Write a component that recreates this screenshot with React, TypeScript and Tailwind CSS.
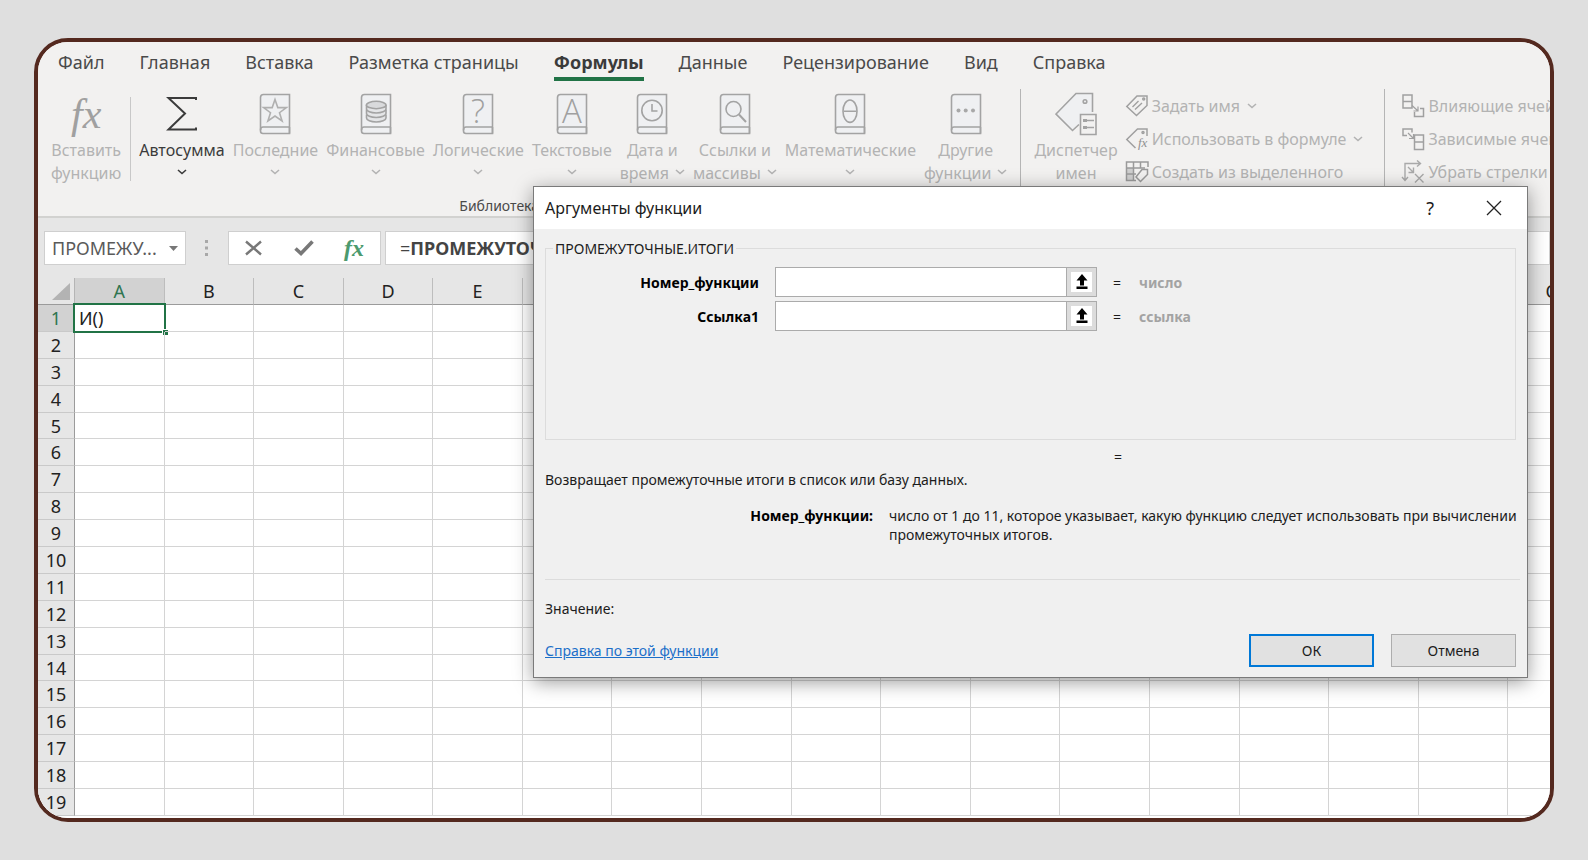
import React, { useState } from 'react';

const TABS = ['Файл', 'Главная', 'Вставка', 'Разметка страницы', 'Формулы', 'Данные', 'Рецензирование', 'Вид', 'Справка'];
const COLUMNS = 'ABCDEFGHIJKLMNOPQ'.split('');
const ROWS = Array.from({ length: 19 }, (_, i) => i + 1);

const Chevron: React.FC = () => (
  <svg width="10" height="6" viewBox="0 0 10 6" fill="none" stroke="currentColor" strokeWidth="1.6">
    <path d="M1 1L5 4.5L9 1" />
  </svg>
);

const Book: React.FC<{ children: React.ReactNode }> = ({ children }) => (
  <svg width="32" height="42" viewBox="0 0 32 42" fill="none" stroke="#a3a3a3" strokeWidth="1.6">
    <path d="M4.5 1.5H30.5V40.5H4C2.5 40.5 1.5 39.5 1.5 38V4.5C1.5 2.8 2.8 1.5 4.5 1.5Z" fill="#eff0f2" />
    <path d="M30.5 34H4C2.5 34 1.5 35 1.5 37.2M30.5 34V40.5" />
    {children}
  </svg>
);

const StarMark = () => <path d="M16 6.5L18.8 14.6H27.4L20.5 19.7L23.1 28L16 23L8.9 28L11.5 19.7L4.6 14.6H13.2Z" stroke="#b0b0b0" />;

const CoinsMark = () => (
  <g fill="#e4e5e7">
    <path d="M6.5 21.5V25C6.5 27.2 10.7 29 16.2 29S26 27.2 26 25V21.5" />
    <path d="M6.5 16.5V20.5C6.5 22.7 10.7 24.5 16.2 24.5S26 22.7 26 20.5V16.5" />
    <path d="M6.5 12V16C6.5 18.2 10.7 20 16.2 20S26 18.2 26 16V12" />
    <ellipse cx="16.2" cy="12" rx="9.8" ry="3.7" fill="#d9dadc" />
  </g>
);

const LetterMark: React.FC<{ letter: string }> = ({ letter }) => (
  <text x="16" y="30" textAnchor="middle" fontSize="33" fontFamily="Open Sans, sans-serif" fontWeight="300" fill="#a0a0a0" stroke="none">{letter}</text>
);

const ClockMark = () => (
  <g>
    <circle cx="16" cy="17.5" r="10.2" />
    <path d="M16 11V18H21.5" />
  </g>
);

const LensMark = () => (
  <g>
    <circle cx="14.5" cy="16" r="7.5" />
    <path d="M20 21.5L27 29" strokeWidth="2" />
  </g>
);

const ThetaMark = () => (
  <g>
    <ellipse cx="16" cy="18.2" rx="7" ry="11.2" />
    <path d="M9.5 18.2H22.5" />
  </g>
);

const DotsMark = () => (
  <g fill="#a8a8a8" stroke="none">
    <circle cx="8.5" cy="17.5" r="2" />
    <circle cx="15.7" cy="17.5" r="2" />
    <circle cx="23" cy="17.5" r="2" />
  </g>
);

const SigmaIcon = () => (
  <svg width="32" height="42" viewBox="0 0 32 42" fill="none" stroke="#3b3b3b" strokeWidth="2">
    <path d="M30 7V5H2.5L19 20.500L2.500 36.500H30V34.500" />
  </svg>
);

const NameManagerIcon = () => (
  <svg width="42" height="44" viewBox="0 0 42 44" fill="none" stroke="#a3a3a3" strokeWidth="1.6">
    <path d="M37.5 20V1.5H21L1 22L17.5 38.500L24 32.500" fill="#eff0f2" />
    <circle cx="30" cy="9.5" r="1.8" />
    <path d="M25.500 22.500H41V42.500H25.500Z" fill="#f2f1f0" />
    <path d="M28 28.500H32M28 35.500H32" strokeWidth="3" />
    <path d="M32 28.500H39M32 35.500H39" strokeWidth="1.4" />
  </svg>
);

const TagIcon = () => (
  <svg width="24" height="24" viewBox="0 0 24 24" fill="none" stroke="#a0a0a0" strokeWidth="1.5">
    <path d="M12 2H22V11.5L11.5 21.5L1.8 12.5Z" />
    <path d="M7.500 13L13.500 7M10 15.500L17 9" strokeWidth="1.4" />
    <circle cx="18.7" cy="5" r="1" />
  </svg>
);

const TagFxIcon = () => (
  <svg width="24" height="24" viewBox="0 0 24 24" fill="none" stroke="#a0a0a0" strokeWidth="1.5">
    <path d="M22 9V2H12.5L1.8 12.5L10.500 21" />
    <circle cx="18" cy="5.500" r="1" />
    <text x="13" y="20" fontSize="13" fontStyle="italic" fontFamily="Liberation Serif, serif" fill="#909090" stroke="none">fx</text>
  </svg>
);

const FromSelectionIcon = () => (
  <svg width="24" height="24" viewBox="0 0 24 24" fill="none" stroke="#9a9a9a" strokeWidth="1.5">
    <path d="M2 8H8V20H2Z" fill="#cfcfcf" stroke="none" />
    <path d="M23 7V2H1.5V20.5H11M1.5 8H20M1.5 14H11M8.5 2V20M15.5 2V8" />
    <path d="M17 9.5H22.5V14.5L15.5 21.5L11 17Z" fill="#f2f1f0" />
  </svg>
);

const PrecedentsIcon = () => (
  <svg width="24" height="24" viewBox="0 0 24 24" fill="none" stroke="#a0a0a0" strokeWidth="1.5">
    <path d="M2 1H11V14H2ZM2 7.5H11" />
    <path d="M13.5 18V22.5H22.5V14.5H19" />
    <path d="M11 11.5L16.5 16.5M17 12.5V17H12.5" strokeWidth="1.2" />
  </svg>
);

const DependentsIcon = () => (
  <svg width="24" height="24" viewBox="0 0 24 24" fill="none" stroke="#a0a0a0" strokeWidth="1.5">
    <path d="M6 8.5H2V2H11V5.5" />
    <path d="M13.5 8H22.5V22.5H13.5ZM13.5 15H22.5" />
    <path d="M7 6L12 11M12.5 7V11.5H8" strokeWidth="1.2" />
  </svg>
);

const RemoveArrowsIcon = () => (
  <svg width="24" height="24" viewBox="0 0 24 24" fill="none" stroke="#a9a9a9" strokeWidth="1.4">
    <path d="M4 20V3.5H19M16 0.5L19.5 3.5L16 6.5M1 17L4 20.5L7 17" />
    <path d="M7 7L12 12M12.5 7.5V12.5H7.5M14 14L22.5 22.5M22.5 14L14 22.5" />
  </svg>
);

const LIBRARY = [
  { first: 'Последние', mark: <StarMark /> },
  { first: 'Финансовые', mark: <CoinsMark /> },
  { first: 'Логические', mark: <LetterMark letter="?" /> },
  { first: 'Текстовые', mark: <LetterMark letter="A" /> },
  { first: 'Дата и', second: 'время', mark: <ClockMark /> },
  { first: 'Ссылки и', second: 'массивы', mark: <LensMark /> },
  { first: 'Математические', mark: <ThetaMark /> },
  { first: 'Другие', second: 'функции', mark: <DotsMark /> }
];

interface RibbonButtonProps {
  icon: React.ReactNode;
  first: string;
  second?: string;
  menu?: boolean;
  enabled?: boolean;
}

const RibbonButton: React.FC<RibbonButtonProps> = ({ icon, first, second, menu, enabled }) => (
  <button
    disabled={!enabled}
    className={`flex shrink-0 flex-col items-center whitespace-nowrap text-base leading-[23px] ${enabled ? 'text-[#3b3b3b]' : 'text-[#b3b3b3]'}`}
  >
    <span className="mb-0.5 flex h-[46px] items-center">{icon}</span>
    <span>{first}</span>
    <span className="flex h-[23px] items-center gap-1.5">
      {second}
      {menu && <span className="pb-1"><Chevron /></span>}
    </span>
  </button>
);

const SmallButton: React.FC<{ icon: React.ReactNode; label: string; menu?: boolean }> = ({ icon, label, menu }) => (
  <button disabled className="flex h-[33px] items-center gap-[3px] whitespace-nowrap text-base text-[#b3b3b3]">
    {icon}
    <span>{label}</span>
    {menu && <span className="pl-1"><Chevron /></span>}
  </button>
);

const Ribbon: React.FC = () => {
  const [activeTab, setActiveTab] = useState('Формулы');

  return (
    <header className="h-[176px] shrink-0 overflow-hidden border-b-2 border-[#d2d2d0] bg-[#f2f1f0]">
      <nav className="flex h-[47px] items-start gap-[35px] pl-5 pt-2">
        {TABS.map((tab) => (
          <button
            key={tab}
            onClick={() => setActiveTab(tab)}
            className={`h-[31px] whitespace-nowrap border-b-4 pb-[3px] text-lg leading-6 ${activeTab === tab ? 'border-[#217346] font-bold text-[#3b3b3b]' : 'border-transparent text-[#4a4a4a]'}`}
          >
            {tab}
          </button>
        ))}
      </nav>
      <div className="flex">
        <div className="pl-[13px] pr-[9px] pt-0.5">
          <RibbonButton
            icon={<span className="font-['Liberation_Serif',serif] text-[42px] italic leading-none text-[#a0a0a0]">fx</span>}
            first="Вставить"
            second="функцию"
          />
        </div>
        <div>
          <div className="flex gap-2 pt-0.5">
            <div className="mt-1.5 h-[84px] w-px bg-[#c8c8c8]" />
            <RibbonButton icon={<SigmaIcon />} first="Автосумма" menu enabled />
            {LIBRARY.map(({ first, second, mark }) => (
              <RibbonButton key={first} icon={<Book>{mark}</Book>} first={first} second={second} menu />
            ))}
          </div>
          <p className="mt-[11px] pl-[329px] text-sm text-[#4a4a4a]">Библиотека функций</p>
        </div>
        <div className="ml-[13px] h-[122px] w-px shrink-0 bg-[#b5b5b5]" />
        <div className="pl-[13px] pt-0.5">
          <RibbonButton icon={<NameManagerIcon />} first="Диспетчер" second="имен" />
        </div>
        <div className="pl-[7px]">
          <SmallButton icon={<TagIcon />} label="Задать имя" menu />
          <SmallButton icon={<TagFxIcon />} label="Использовать в формуле" menu />
          <SmallButton icon={<FromSelectionIcon />} label="Создать из выделенного" />
        </div>
        <div className="ml-[21px] h-[122px] w-px shrink-0 bg-[#b5b5b5]" />
        <div className="pl-4">
          <SmallButton icon={<PrecedentsIcon />} label="Влияющие ячейки" />
          <SmallButton icon={<DependentsIcon />} label="Зависимые ячейки" />
          <SmallButton icon={<RemoveArrowsIcon />} label="Убрать стрелки" menu />
        </div>
      </div>
    </header>
  );
};

const FormulaBar: React.FC = () => (
  <div className="flex h-[60px] shrink-0 items-center bg-[#e6e6e6] pl-1.5">
    <button className="flex h-[34px] w-[142px] items-center justify-between border border-[#cfcfcf] bg-white px-[7px] text-lg text-[#5a5a5a]">
      ПРОМЕЖУ...
      <svg width="9" height="5" viewBox="0 0 9 5" fill="#777"><path d="M0 0H9L4.5 5Z" /></svg>
    </button>
    <svg className="mx-[18px]" width="6" height="18" viewBox="0 0 6 18" fill="#a8a8a8">
      <path d="M1 1H4V4H1ZM1 7.5H4V10.5H1ZM1 14H4V17H1Z" />
    </svg>
    <div className="flex h-[34px] w-[153px] items-center justify-between border border-[#cfcfcf] bg-white px-4">
      <button aria-label="Отмена ввода">
        <svg width="18" height="18" viewBox="0 0 18 18" fill="none" stroke="#787878" strokeWidth="2.4"><path d="M1 2.5L16 15.5M16 2.5L1 15.5" /></svg>
      </button>
      <button aria-label="Ввод">
        <svg width="20" height="18" viewBox="0 0 20 18" fill="none" stroke="#787878" strokeWidth="3.6"><path d="M1.5 9.5L7 14.5L18.5 2.5" /></svg>
      </button>
      <button className="font-['Liberation_Serif',serif] text-2xl font-bold italic leading-none text-[#4c9a6e]">fx</button>
    </div>
    <div className="ml-1 flex h-[34px] flex-1 items-center overflow-hidden border border-[#cfcfcf] bg-white pl-3.5 text-lg text-[#444]">
      =<b>ПРОМЕЖУТОЧНЫЕ.ИТОГИ</b>(
    </div>
  </div>
);

const Sheet: React.FC = () => (
  <div className="min-h-0 flex-1 overflow-hidden bg-white">
    <table className="h-[538px] w-[1560px] table-fixed border-separate border-spacing-0 text-lg leading-5 text-[#222]">
      <thead>
        <tr className="h-[27px] bg-[#e6e6e6]">
          <th className="w-[37px] border-b border-r border-b-[#9b9b9b] border-r-[#b5b5b5] p-0">
            <svg className="ml-auto mr-1" width="18" height="17" viewBox="0 0 18 17" fill="#b3b3b3"><path d="M18 0V17H0Z" /></svg>
          </th>
          {COLUMNS.map((col) => (
            <th
              key={col}
              className={`border-b border-r border-b-[#9b9b9b] border-r-[#bdbdbd] p-0 font-normal ${col === 'A' ? 'bg-[#d2d2d2] text-[#2f7550]' : ''}`}
            >
              {col}
            </th>
          ))}
        </tr>
      </thead>
      <tbody>
        {ROWS.map((row) => (
          <tr key={row} className="h-[26px]">
            <th className={`border-b border-r border-b-[#c9c9c9] border-r-[#9b9b9b] p-0 font-normal ${row === 1 ? 'bg-[#d2d2d2] text-[#2f7550]' : 'bg-[#e6e6e6]'}`}>
              {row}
            </th>
            {COLUMNS.map((col) => (
              <td key={col} className="relative border-b border-r border-[#d4d4d4] p-0">
                {row === 1 && col === 'A' && (
                  <div className="absolute -inset-x-0.5 -bottom-0.5 -top-0.5 flex items-center border-2 border-[#217346] pl-1">
                    И()
                    <span className="absolute -bottom-1 -right-1 size-1.5 border-l border-t border-white bg-[#217346]" />
                  </div>
                )}
              </td>
            ))}
          </tr>
        ))}
      </tbody>
    </table>
  </div>
);

const Argument: React.FC<{ id: string; label: string; hint: string }> = ({ id, label, hint }) => {
  const [value, setValue] = useState('');

  return (
    <div className="flex items-center">
      <label htmlFor={id} className="w-[213px] text-right font-bold text-black">{label}</label>
      <div className="ml-4 flex h-[30px] w-[322px] border border-[#ababab] bg-white">
        <input id={id} value={value} onChange={(e) => setValue(e.target.value)} className="min-w-0 flex-1 px-1 outline-none" />
        <button aria-label={`Выбрать диапазон: ${label}`} className="flex w-[29px] items-center justify-center border-4 border-[#dcdcdc] bg-white outline outline-1 outline-[#ababab]">
          <svg width="12" height="16" viewBox="0 0 12 16" fill="#000"><path d="M6 0L11.5 6.5H8V11.5H4V6.5H0.5ZM0.5 12.500H11.5V15H0.5Z" /></svg>
        </button>
      </div>
      <span className="ml-4 w-[26px]">=</span>
      <span className="font-bold text-[#a3a3a3]">{hint}</span>
    </div>
  );
};

const ArgumentsDialog: React.FC = () => (
  <section
    role="dialog"
    aria-labelledby="dialog-title"
    className="absolute left-[495px] right-[22px] top-36 border border-[#7a7a7a] bg-[#f0f0f0] text-sm leading-[19px] text-[#1c1c1c] shadow-[0_4px_18px_rgba(0,0,0,0.4)]"
  >
    <div className="flex h-[42px] items-center bg-white pl-[11px] pr-[25px]">
      <h2 id="dialog-title" className="flex-1 text-base">Аргументы функции</h2>
      <button aria-label="Справка" className="mr-[52px] text-lg">?</button>
      <button aria-label="Закрыть">
        <svg width="16" height="16" viewBox="0 0 16 16" fill="none" stroke="#222" strokeWidth="1.3"><path d="M1 1L15 15M15 1L1 15" /></svg>
      </button>
    </div>
    <div className="px-[11px] py-2.5">
      <fieldset className="h-[201px] border border-[#dcdcdc]">
        <legend className="ml-[7px] px-0.5">ПРОМЕЖУТОЧНЫЕ.ИТОГИ</legend>
        <div className="flex flex-col gap-1 pt-[9px]">
          <Argument id="function-number" label="Номер_функции" hint="число" />
          <Argument id="ref1" label="Ссылка1" hint="ссылка" />
        </div>
      </fieldset>
      <p className="mt-[7px] pl-[569px]">=</p>
      <p className="mt-1">Возвращает промежуточные итоги в список или базу данных.</p>
      <div className="-mr-1 mt-[17px] flex h-[74px] gap-4 border-b border-[#dcdcdc]">
        <b className="w-[328px] shrink-0 text-right text-black">Номер_функции:</b>
        <p>число от 1 до 11, которое указывает, какую функцию следует использовать при вычислении промежуточных итогов.</p>
      </div>
      <p className="mt-[19px]">Значение:</p>
      <div className="mt-4 flex items-center gap-[17px]">
        <a href="#help" className="mr-auto text-[#1c6fc9] underline">Справка по этой функции</a>
        <button className="h-[33px] w-[125px] border-2 border-[#0078d7] bg-[#e1e1e1]">ОК</button>
        <button className="h-[33px] w-[125px] border border-[#adadad] bg-[#e1e1e1]">Отмена</button>
      </div>
    </div>
  </section>
);

export default function App() {
  return (
    <main className="flex h-screen bg-[#dfdfdf] px-[34px] py-[38px] font-['Noto_Sans',sans-serif]">
      <div className="relative flex min-w-0 flex-1 flex-col overflow-hidden rounded-[34px] border-4 border-[#54291f] bg-[#f2f1f0]">
        <Ribbon />
        <FormulaBar />
        <Sheet />
        <ArgumentsDialog />
      </div>
    </main>
  );
}
